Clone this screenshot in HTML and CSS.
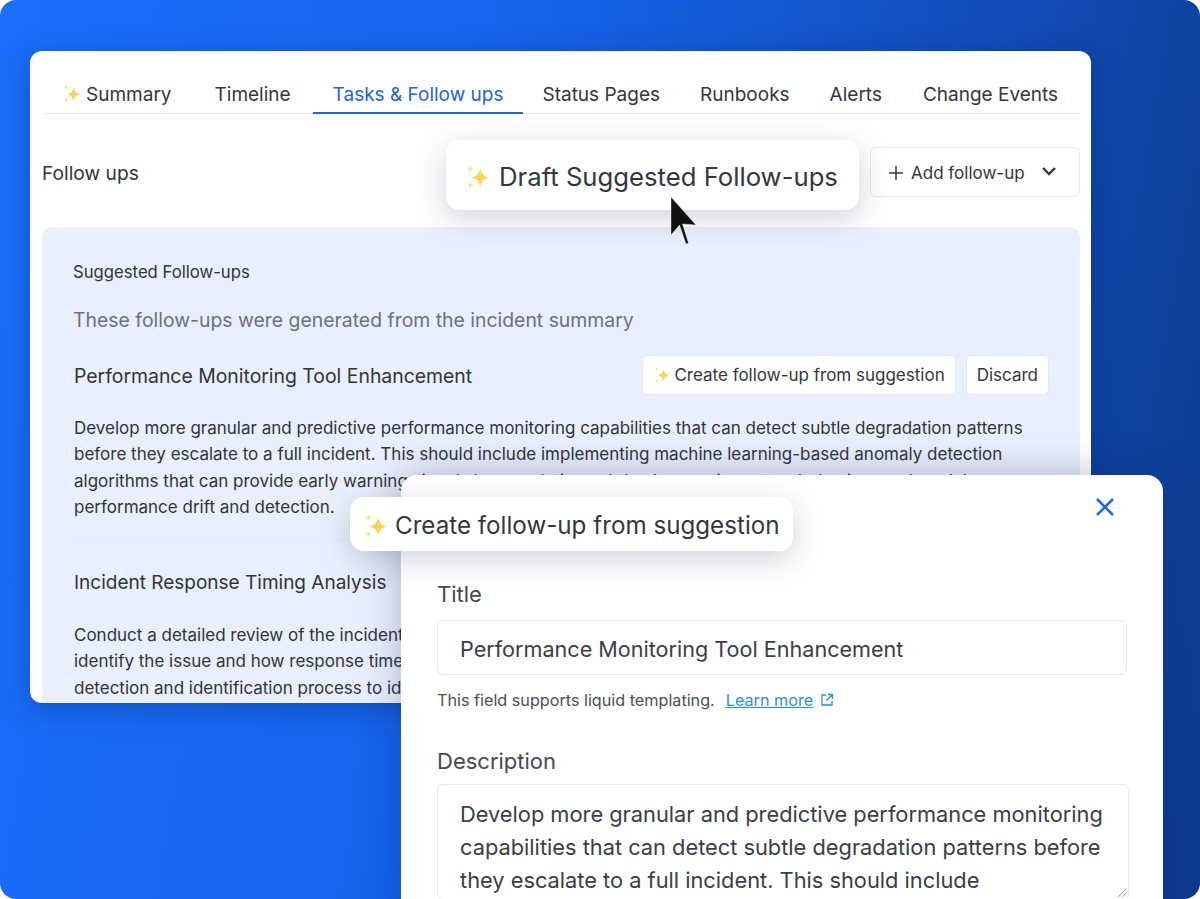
FILE: index.html
```html
<!DOCTYPE html>
<html lang="en">
<head>
    <meta charset="UTF-8">
    <title>Suggested Follow-ups</title>
    <link rel="stylesheet" href="styles.css">
</head>
<body>
    <svg class="defs" width="0" height="0">
        <symbol id="sparkle" viewBox="0 0 24 24">
            <path fill="#f9d35c" d="M14 4c1 5 3 7.5 8 8.5-5 1-7 3.5-8 8.5-1-5-3-7.5-8-8.5 5-1 7-3.5 8-8.5z"/>
            <path fill="#fbe08a" d="M5 1c.4 2 1 2.8 2.5 3.3C6 4.8 5.4 5.6 5 7.5 4.6 5.6 4 4.8 2.5 4.3 4 3.8 4.6 3 5 1z"/>
            <path fill="#fbe08a" d="M5 16c.4 2 1 2.8 2.5 3.3C6 19.8 5.4 20.6 5 22.5 4.6 20.6 4 19.8 2.5 19.3 4 18.8 4.6 18 5 16z"/>
        </symbol>
    </svg>

    <div class="stage">
        <div class="window incident">
            <nav class="tabs">
                <a class="tab tab-summary"><svg class="spark"><use href="#sparkle"/></svg>Summary</a>
                <a class="tab tab-timeline">Timeline</a>
                <a class="tab active">Tasks &amp; Follow ups</a>
                <a class="tab tab-status">Status Pages</a>
                <a class="tab">Runbooks</a>
                <a class="tab tab-alerts">Alerts</a>
                <a class="tab">Change Events</a>
            </nav>

            <div class="follow-head">
                <span class="follow-title">Follow ups</span>
                <button class="add-btn">
                    <svg class="plus" viewBox="0 0 16 16"><path d="M8 1v14M1 8h14"/></svg>
                    Add follow-up
                    <svg class="chev" viewBox="0 0 16 10"><path d="M2 2l6 6 6-6"/></svg>
                </button>
            </div>

            <div class="suggested">
                <div class="suggested-title">Suggested Follow-ups</div>
                <div class="suggested-sub">These follow-ups were generated from the incident summary</div>

                <div class="item-head">
                    <span class="item-title">Performance Monitoring Tool Enhancement</span>
                    <div class="item-actions">
                        <button class="small-btn"><svg class="spark-sm"><use href="#sparkle"/></svg>Create follow-up from suggestion</button>
                        <button class="small-btn">Discard</button>
                    </div>
                </div>
                <p class="item-text">Develop more granular and predictive performance monitoring capabilities that can detect subtle degradation patterns before they escalate to a full incident. This should include implementing machine learning-based anomaly detection algorithms that can provide early warning signals by correlating subtle changes in system behaviour and model<br>performance drift and detection.</p>
                <div class="item-rule"></div>

                <div class="item-head second">
                    <span class="item-title">Incident Response Timing Analysis</span>
                </div>
                <p class="item-text">Conduct a detailed review of the incident timeline to understand how long it took to<br>identify the issue and how response times could be improved across the whole team<br>detection and identification process to identify gaps in the current tooling</p>
            </div>
        </div>

        <div class="window modal">
            <svg class="close" viewBox="0 0 20 20"><path d="M2 2l16 16M18 2L2 18"/></svg>
            <label class="field-label">Title</label>
            <div class="field">Performance Monitoring Tool Enhancement</div>
            <div class="hint">
                This field supports liquid templating.
                <a class="learn">Learn more</a>
                <svg class="ext" viewBox="0 0 14 14"><path d="M6 2H2v10h10V8M8 1.5h4.5V6M12.5 1.5l-6 6"/></svg>
            </div>
            <label class="field-label desc-label">Description</label>
            <div class="field area">Develop more granular and predictive performance monitoring capabilities that can detect subtle degradation patterns before they escalate to a full incident. This should include
                <svg class="grip" viewBox="0 0 12 12"><path d="M11 1L1 11M11 6l-5 5"/></svg>
            </div>
        </div>

        <div class="pill draft"><svg class="spark-lg"><use href="#sparkle"/></svg>Draft Suggested Follow-ups</div>
        <div class="pill create"><svg class="spark-lg"><use href="#sparkle"/></svg>Create follow-up from suggestion</div>

        <svg class="cursor" viewBox="0 0 28 50">
            <path fill="#111" stroke="#fff" stroke-opacity="0.6" stroke-width="0.6" d="M2 2v38l8.5-10L17 49l2.5-1-6-19 13.5 1z"/>
        </svg>
    </div>
</body>
</html>
```

FILE: styles.css
```css
* {
    box-sizing: border-box;
}

html, body {
    margin: 0;
    height: 899px;
    background: #fff;
    overflow: hidden;
}

body {
    font-family: Inter, "Liberation Sans", sans-serif;
    color: #30343b;
}

.defs {
    position: absolute;
}

.stage {
    position: relative;
    width: 1200px;
    height: 899px;
    overflow: hidden;
    border-radius: 16px;
    background: linear-gradient(100deg, #1a6ffb 0%, #1766f0 35%, #1250c0 70%, #0e3a8c 100%);
}

.window {
    position: absolute;
    background: #fff;
}

/* incident card */
.incident {
    left: 30px;
    top: 51px;
    width: 1061px;
    height: 652px;
    border-radius: 12px;
    overflow: hidden;
    padding: 0 11px 0 12px;
    box-shadow: 0 6px 30px rgba(10, 30, 90, 0.35);
}

.tabs {
    display: flex;
    height: 63px;
    align-items: flex-end;
    border-bottom: 1px solid #e8eaee;
}

.tab {
    display: flex;
    align-items: center;
    height: 38px;
    padding: 0 20px;
    font-size: 19px;
    color: #33373d;
    white-space: nowrap;
}

.tab-summary {
    padding-right: 23px;
}

.tab-timeline {
    padding: 0 22px 0 20px;
}

.tab-status {
    padding-left: 19px;
}

.tab-alerts {
    padding-right: 21px;
}

.tab.active {
    color: #2563d6;
    border-bottom: 2px solid #2563d6;
    margin-bottom: -1px;
}

.spark {
    width: 20px;
    height: 20px;
    margin-right: 4px;
}

.follow-head {
    display: flex;
    justify-content: space-between;
    align-items: center;
    padding-top: 33px;
    height: 82px;
}

.follow-title {
    padding-top: 3px;
    font-size: 19.2px;
}

.add-btn {
    display: flex;
    align-items: center;
    width: 210px;
    height: 50px;
    padding: 2px 22px 0 17px;
    background: #fff;
    border: 1px solid #e6e8ec;
    border-radius: 6px;
    font: inherit;
    font-size: 17px;
    color: #33373d;
}

.plus {
    width: 16px;
    height: 16px;
    margin-right: 7px;
    fill: none;
    stroke: #33373d;
    stroke-width: 1.5;
}

.chev {
    width: 16px;
    height: 10px;
    margin: -3px 0 0 auto;
    fill: none;
    stroke: #33373d;
    stroke-width: 2.4;
}

.suggested {
    margin-top: 31px;
    padding: 34px 31px 0;
    height: 500px;
    background: #e9effc;
    border-radius: 10px;
}

.suggested-title {
    font-size: 16.7px;
    line-height: 22px;
}

.suggested-sub {
    margin-top: 24px;
    font-size: 19.4px;
    line-height: 26px;
    color: #6c7280;
}

.item-head {
    display: flex;
    justify-content: space-between;
    align-items: center;
    margin-top: 22px;
    height: 40px;
    padding-left: 1px;
}

.item-head.second {
    margin-top: 20px;
}

.item-title {
    padding-top: 2px;
    font-size: 19.4px;
}

.second .item-title {
    font-size: 19px;
}

.item-actions {
    display: flex;
    gap: 10px;
}

.small-btn {
    display: flex;
    align-items: center;
    height: 40px;
    padding: 0 10px;
    background: #fff;
    border: 1px solid #e4e8f0;
    border-radius: 5px;
    font: inherit;
    font-size: 17px;
    color: #33373d;
    white-space: nowrap;
}

.spark-sm {
    width: 18px;
    height: 18px;
    margin-right: 3px;
}

.item-text {
    margin: 20px 0 0 1px;
    font-size: 17px;
    line-height: 26.3px;
    width: 960px;
}

.second + .item-text {
    margin-top: 21px;
}

.item-rule {
    height: 1px;
    margin-top: 20px;
    background: #e5eafa;
}

/* modal */
.modal {
    left: 401px;
    top: 475px;
    width: 762px;
    height: 440px;
    border-radius: 16px;
    padding: 105px 36px 0;
    box-shadow: 0 0 40px rgba(10, 30, 90, 0.28);
}

.close {
    position: absolute;
    right: 48px;
    top: 22px;
    width: 20px;
    height: 20px;
    fill: none;
    stroke: #2563d6;
    stroke-width: 2.5;
}

.field-label {
    display: block;
    font-size: 22px;
    line-height: 28px;
    color: #444950;
}

.field {
    margin-top: 12px;
    padding: 0 22px;
    width: 690px;
    height: 55px;
    line-height: 57px;
    border: 1px solid #e6e8ec;
    border-radius: 6px;
    font-size: 21.6px;
    color: #3a3e45;
}

.hint {
    display: flex;
    align-items: center;
    margin-top: 12px;
    height: 26px;
    font-size: 16.2px;
    color: #4a4f57;
}

.learn {
    margin-left: 11px;
    color: #2b8fd8;
    text-decoration: underline;
}

.ext {
    width: 14px;
    height: 14px;
    margin-left: 7px;
    fill: none;
    stroke: #2b8fd8;
    stroke-width: 1.3;
}

.desc-label {
    margin-top: 34px;
}

.field.area {
    position: relative;
    margin-top: 9px;
    width: 692px;
    height: 116px;
    padding: 13px 14px 0 22px;
    font-size: 21.8px;
    line-height: 33.2px;
}

.grip {
    position: absolute;
    right: 1px;
    bottom: 1px;
    width: 10px;
    height: 10px;
    fill: none;
    stroke: #888;
    stroke-width: 1;
}

/* floating callouts */
.pill {
    position: absolute;
    display: flex;
    align-items: center;
    background: #fff;
    border-radius: 14px;
    white-space: nowrap;
    color: #33373d;
    box-shadow: 0 8px 30px rgba(20, 30, 60, 0.2);
}

.draft {
    left: 446px;
    top: 140px;
    width: 413px;
    height: 70px;
    padding: 3px 0 0 19px;
    font-size: 25.7px;
}

.draft .spark-lg {
    margin-right: 8px;
}

.create {
    left: 350px;
    top: 497px;
    width: 443px;
    height: 54px;
    padding: 3px 0 0 13px;
    font-size: 24.2px;
}

.spark-lg {
    width: 26px;
    height: 26px;
    margin-right: 6px;
}

.cursor {
    position: absolute;
    left: 669px;
    top: 195px;
    width: 28px;
    height: 50px;
}
```
